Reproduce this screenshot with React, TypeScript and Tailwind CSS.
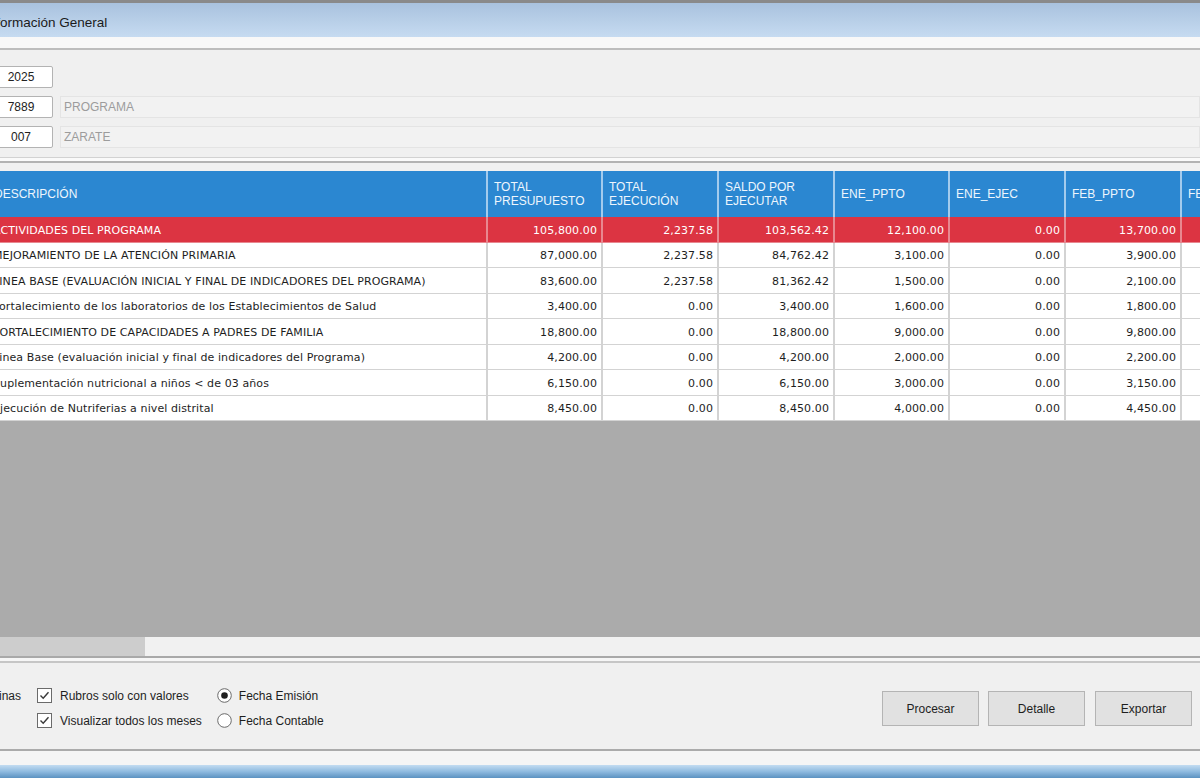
import React from "react";

type Row = {
  desc: string;
  values: string[];
  highlight?: boolean;
};

const rows: Row[] = [
  {desc: "ACTIVIDADES DEL PROGRAMA", values: ["105,800.00", "2,237.58", "103,562.42", "12,100.00", "0.00", "13,700.00", "0.00"], highlight: true},
  {desc: "MEJORAMIENTO DE LA ATENCIÓN PRIMARIA", values: ["87,000.00", "2,237.58", "84,762.42", "3,100.00", "0.00", "3,900.00", "0.00"]},
  {desc: "LINEA BASE (EVALUACIÓN INICIAL Y FINAL DE INDICADORES DEL PROGRAMA)", values: ["83,600.00", "2,237.58", "81,362.42", "1,500.00", "0.00", "2,100.00", "0.00"]},
  {desc: "Fortalecimiento de los laboratorios de los Establecimientos de Salud", values: ["3,400.00", "0.00", "3,400.00", "1,600.00", "0.00", "1,800.00", "0.00"]},
  {desc: "FORTALECIMIENTO DE CAPACIDADES A PADRES DE FAMILIA", values: ["18,800.00", "0.00", "18,800.00", "9,000.00", "0.00", "9,800.00", "0.00"]},
  {desc: "Linea Base (evaluación inicial y final de indicadores del Programa)", values: ["4,200.00", "0.00", "4,200.00", "2,000.00", "0.00", "2,200.00", "0.00"]},
  {desc: "Suplementación nutricional a niños < de 03 años", values: ["6,150.00", "0.00", "6,150.00", "3,000.00", "0.00", "3,150.00", "0.00"]},
  {desc: "Ejecución de Nutriferias a nivel distrital", values: ["8,450.00", "0.00", "8,450.00", "4,000.00", "0.00", "4,450.00", "0.00"]},
];

const headers: string[][] = [
  ["DESCRIPCIÓN"],
  ["TOTAL", "PRESUPUESTO"],
  ["TOTAL", "EJECUCIÓN"],
  ["SALDO POR", "EJECUTAR"],
  ["ENE_PPTO"],
  ["ENE_EJEC"],
  ["FEB_PPTO"],
  ["FEB_EJEC"],
];

const cols = "grid grid-cols-[500px_115px_116px_116px_115px_116px_116px_130px]";

function CheckBox() {
  return (
    <svg width="15" height="15" viewBox="0 0 15 15" className="shrink-0">
      <rect x="0.5" y="0.5" width="14" height="14" fill="#ffffff" stroke="#6b6b6b"/>
      <path d="M3.5 7.5 L6.2 10.2 L11.5 4.2" fill="none" stroke="#3a3a3a" strokeWidth="1.4"/>
    </svg>
  );
}

function Radio({checked}: {checked?: boolean}) {
  return (
    <svg width="15" height="15" viewBox="0 0 15 15" className="shrink-0">
      <circle cx="7.5" cy="7.5" r="6.8" fill="#ffffff" stroke="#6b6b6b"/>
      {checked && <circle cx="7.5" cy="7.5" r="3.3" fill="#1f1f1f"/>}
    </svg>
  );
}

function InputRow({value, label}: {value: string; label?: string}) {
  return (
    <div className="flex h-[22px] items-stretch">
      <div className="w-[64px] -ml-[11px] bg-white border border-[#b3b3b3] rounded-[2px] flex items-center justify-center text-[12px] text-[#222]">
        {value}
      </div>
      {label !== undefined && (
        <div className="flex-1 ml-[7px] border border-[#e4e4e4] bg-[#f2f2f2] flex items-center pl-[3px] text-[12px] text-[#9c9c9c]">
          {label}
        </div>
      )}
    </div>
  );
}

export default function App() {
  return (
    <div className="w-[1200px] h-[778px] overflow-hidden bg-[#f0f0f0] flex flex-col font-['Liberation_Sans',Arial,sans-serif]">
      {/* window top border + title */}
      <div className="h-[3px] bg-[#8a8a8a]"/>
      <div className="h-[34px] bg-gradient-to-b from-[#a9c2de] to-[#c6dbf1] flex items-center">
        <span className="-ml-[15px] pt-[6px] text-[13.5px] text-[#1b1b1b]">Información General</span>
      </div>
      <div className="h-[11px] bg-[#f8f8f8]"/>
      <div className="h-[2px] bg-[#bdbdbd]"/>

      {/* filtros */}
      <div className="h-[107px] flex flex-col gap-[8px] pt-[16px]">
        <InputRow value="2025"/>
        <InputRow value="7889" label="PROGRAMA"/>
        <InputRow value="007" label="ZARATE"/>
      </div>
      <div className="h-[1px] bg-[#d2d2d2]"/>
      <div className="h-[3px] bg-[#fafafa]"/>
      <div className="h-[2px] bg-[#b2b2b2]"/>
      <div className="h-[8px]"/>

      {/* grilla */}
      <div className="-ml-[12px] flex flex-col">
        <div className={`${cols} h-[46px] bg-[#2b87d1] text-[12px] text-[#eef6fd]`}>
          {headers.map((h, i) => (
            <div key={i} className="border-r-2 border-[#a3cbed] flex flex-col justify-center pl-[6px] leading-[14px] whitespace-nowrap overflow-hidden">
              {h.map((line, j) => (
                <span key={j}>{line}</span>
              ))}
            </div>
          ))}
        </div>
        {rows.map((r, i) => (
          <div
            key={i}
            className={`${cols} h-[25.5px] text-[11px] tracking-[0.1px] font-['DejaVu_Sans',sans-serif] ${r.highlight ? "bg-[#dc3442] text-white" : "bg-white text-[#1e1e1e]"}`}
          >
            <div className={`border-r-2 border-b ${r.highlight ? "border-[#e88890]" : "border-[#d3d3d3]"} flex items-center pt-[3px] pl-[5px] whitespace-nowrap overflow-hidden`}>
              {r.desc}
            </div>
            {r.values.map((v, j) => (
              <div
                key={j}
                className={`border-r-2 border-b ${r.highlight ? "border-[#e88890]" : "border-[#d3d3d3]"} flex items-center justify-end pt-[3px] pr-[4px] whitespace-nowrap overflow-hidden`}
              >
                {v}
              </div>
            ))}
          </div>
        ))}
      </div>
      <div className="flex-1 bg-[#ababab]"/>

      {/* scroll horizontal */}
      <div className="h-[19px] bg-[#f1f1f1] flex">
        <div className="w-[145px] bg-[#cdcdcd]"/>
      </div>
      <div className="h-[2px] bg-[#a9a9a9]"/>
      <div className="h-[3px] bg-[#f6f6f6]"/>
      <div className="h-[2px] bg-[#c6c6c6]"/>

      {/* opciones y acciones */}
      <div className="h-[86px] flex items-start text-[12px] text-[#1e1e1e]">
        <div className="w-[21px] h-[15px] mt-[25px] flex items-center justify-end whitespace-nowrap">Páginas</div>
        <div className="ml-[16px] pt-[25px] flex flex-col gap-[10px]">
          <label className="h-[15px] flex items-center gap-[8px] whitespace-nowrap">
            <CheckBox/>
            <span>Rubros solo con valores</span>
          </label>
          <label className="h-[15px] flex items-center gap-[8px] whitespace-nowrap">
            <CheckBox/>
            <span>Visualizar todos los meses</span>
          </label>
        </div>
        <div className="ml-[15px] pt-[25px] flex flex-col gap-[10px]">
          <label className="h-[15px] flex items-center gap-[7px] whitespace-nowrap">
            <Radio checked/>
            <span>Fecha Emisión</span>
          </label>
          <label className="h-[15px] flex items-center gap-[7px] whitespace-nowrap">
            <Radio/>
            <span>Fecha Contable</span>
          </label>
        </div>
        <div className="ml-auto -mr-[97px] pt-[28px] flex shrink-0">
          {["Procesar", "Detalle", "Exportar", "Salir"].map((b, i) => (
            <button
              key={b}
              className={`w-[97px] h-[35px] bg-[#e1e1e1] border border-[#b4b4b4] text-[12px] text-[#1e1e1e] ${i === 1 ? "ml-[9px]" : i === 2 ? "ml-[10px]" : i === 3 ? "ml-[8px]" : ""}`}
            >
              {b}
            </button>
          ))}
        </div>
      </div>
      <div className="h-[2px] bg-[#ababab]"/>
      <div className="h-[14px] bg-[#f5f5f5]"/>
      <div className="h-[13px] bg-gradient-to-b from-[#c3dcf1] via-[#8fbbe0] to-[#5b92c1]"/>
    </div>
  );
}
